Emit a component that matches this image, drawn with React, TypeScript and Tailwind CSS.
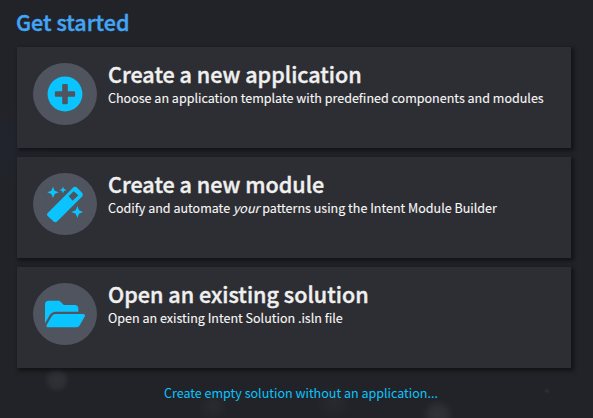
import type { ReactNode } from "react";
import { FaFolderOpen, FaPlusCircle } from "react-icons/fa";

function WandIcon() {
  return (
    <svg width="36" height="37" viewBox="0 0 108 111" fill="currentColor">
      <path
        fillRule="evenodd"
        d="M3 80 L77 6 Q84 -1 91 6 L104 19 Q111 26 104 33 L31 106 Q25 112 19 106 L3 91 Q-3 85 3 80 Z M65 31 L80 16 L94 28 L77 44 Z"
      />
      <path d="M18 2 L23 14 L35 19 L23 24 L18 36 L13 24 L1 19 L13 14 Z" />
      <path d="M48 2 L51 9 L59 12 L51 15 L48 22 L45 15 L38 12 L45 9 Z" />
      <path d="M91 60 L96 73 L108 78 L96 83 L91 95 L86 83 L73 78 L86 73 Z" />
    </svg>
  );
}

type OptionProps = { icon: ReactNode; title: string; children: ReactNode };

function OptionCard({ icon, title, children }: OptionProps) {
  return (
    <button className="flex h-[101px] w-[554px] items-start bg-[#2d2e33] pl-4 pt-4 text-left shadow-[2px_2px_4px_1px_rgba(0,0,0,0.45)]">
      <span className="flex h-[62px] w-16 shrink-0 items-center justify-center rounded-[50%] bg-[#50545f] text-[#0ac4ff]">
        {icon}
      </span>
      <span className="-mt-px ml-[11px] flex flex-col whitespace-nowrap">
        <span className="h-6 text-[21.56px] font-medium leading-6 text-[#f0f0f0] [-webkit-text-stroke:0.4px_#f0f0f0]">{title}</span>
        <span className="h-6 text-[12.53px] leading-6 text-[#f8f8f8] [-webkit-text-stroke:0.1px_#f8f8f8]">{children}</span>
      </span>
    </button>
  );
}

export default function App() {
  return (
    <main className="h-[418px] w-[593px] overflow-hidden bg-[#222328] bg-[radial-gradient(circle_at_57px_380px,#303136_0px,#2d2e33_7px,transparent_13px),radial-gradient(circle_at_438px_415px,#313237_0px,#2d2e33_8px,transparent_16px),radial-gradient(circle_at_213px_406px,#2a2b2f_0px,transparent_15px),radial-gradient(circle_at_334px_402px,#292a2e_0px,transparent_18px),radial-gradient(circle_at_547px_391px,#303136_0px,transparent_3px),radial-gradient(ellipse_at_0px_145px,#20242d_0px,transparent_90px)] pl-[17px] pt-2 font-['Noto_Sans_CJK_SC',sans-serif]">
      <h1 className="-ml-px h-[39px] text-[21.56px] font-medium leading-7 text-[#42a5f5] [-webkit-text-stroke:0.4px_#42a5f5]">Get started</h1>
      <div className="flex flex-col gap-[9px]">
        <OptionCard icon={<FaPlusCircle size={36} />} title="Create a new application">
          Choose an application template with predefined components and modules
        </OptionCard>
        <OptionCard icon={<WandIcon />} title="Create a new module">
          Codify and automate <em>your</em> patterns using the Intent Module Builder
        </OptionCard>
        <OptionCard icon={<FaFolderOpen size={40} />} title="Open an existing solution">
          Open an existing Intent Solution .isln file
        </OptionCard>
      </div>
      <div className="ml-[147px] mt-[13px] whitespace-nowrap text-[12.53px] leading-6 text-[#0ac4ff]">
        Create empty solution without an application...
      </div>
    </main>
  );
}
